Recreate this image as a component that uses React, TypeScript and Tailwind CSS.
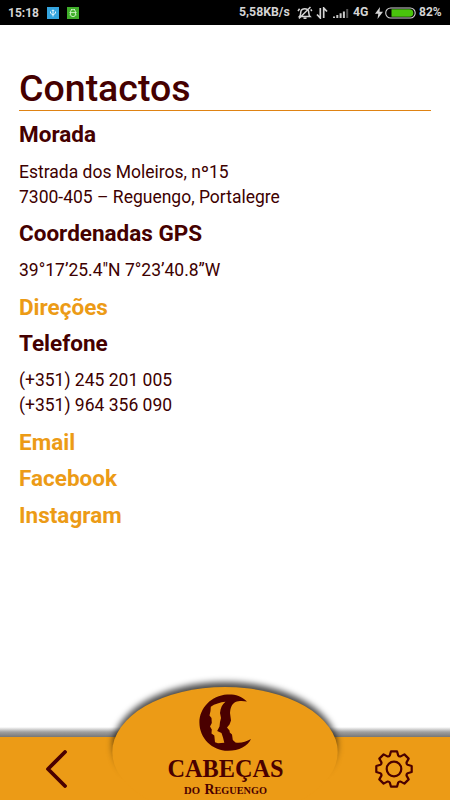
import React from "react";

const GEAR = (() => {
  const profile = [
    [-4.2, -13.6],
    [-3, -17.7],
    [3, -17.7],
    [4.2, -13.6],
  ];
  const parts: string[] = [];
  for (let i = 0; i < 8; i++) {
    const a = (i * Math.PI) / 4;
    const pts = profile.map(([x, y]) =>
      [x * Math.cos(a) - y * Math.sin(a), x * Math.sin(a) + y * Math.cos(a)].map((v) => v.toFixed(2)).join(" ")
    );
    parts.push(i === 0 ? `M${pts[0]}` : `A2.2 2.2 0 0 0 ${pts[0]}`);
    parts.push(`L${pts[1]}L${pts[2]}L${pts[3]}`);
  }
  return parts.join("") + "A2.2 2.2 0 0 0 -4.2 -13.6Z";
})();

function StatusBar() {
  return (
    <header className="flex h-[25px] items-center bg-black pl-2 pr-[7px] text-[12px] font-bold leading-[25px] text-[#d4d4d4]">
      <span className="w-[39px] pt-px">15:18</span>
      <svg className="h-3 w-3" viewBox="0 0 12 12">
        <rect width="12" height="12" fill="#35a5df" />
        <path d="M6 9.500V3M4.800 4L6 2.800l1.200 1.200M3.500 4.500v1.700L6 8l2.500-1.800V4.500" fill="none" stroke="#e4f5ff" />
      </svg>
      <svg className="ml-2 h-3 w-3" viewBox="0 0 12 12">
        <rect width="12" height="12" fill="#3fae2a" />
        <path d="M3.5 5a2.500 2.500 0 0 1 5 0v2.200a2.500 2.500 0 0 1-5 0zM2.400 5.600h7.200M4 2l1 1M8 2L7 3M2.500 7.800h1.200M8.300 7.800h1.200" fill="none" stroke="#cff3c5" strokeWidth=".9" />
      </svg>
      <span className="ml-auto w-[52px] whitespace-nowrap text-[12.3px]">5,58KB/s</span>
      <svg className="ml-[6px] h-[14px] w-4" viewBox="0 0 16 14" fill="none" stroke="#d4d4d4" strokeWidth="1.5">
        <path d="M2.500 10.500c1.500-1.500 1-4 1.500-5.500C5 2 10.500 2 11.500 5c.5 1.500 0 4 1.500 5.500zM6.500 12.200h3M13.500 1L2 12.500M1 5L2.600 2.800M14.800 5L13.800 3.300" />
      </svg>
      <svg className="ml-[3px] h-[12px] w-[12px]" viewBox="0 0 12 12" fill="none" stroke="#d4d4d4" strokeWidth="1.700">
        <path d="M4.300 1v10L1 7.500M7.700 11V1L11 4.500" />
      </svg>
      <svg className="ml-[5px] h-3 w-4" viewBox="0 0 16 12">
        <path d="M0 9.500h2v1.500H0zM3.300 8h2v3h-2zM6.600 6.200h2V11h-2zM9.900 4.400h2V11h-2z" fill="#c8c8c8" />
        <path d="M13.200 2h2v9h-2z" fill="#555" />
      </svg>
      <span className="ml-[4px] w-[17px] whitespace-nowrap text-[12.300px]">4G</span>
      <svg className="ml-[5px] h-3 w-2" viewBox="0 0 8 12">
        <path d="M5 0L0 6.800h3.300L2.500 12 8 4.800H4.500z" fill="#d4d4d4" />
      </svg>
      <svg className="ml-[2px] h-3 w-[31px]" viewBox="0 0 31 12">
        <rect x=".7" y="1" width="29.500" height="10" rx="5" fill="none" stroke="#d4d4d4" strokeWidth="1.100" />
        <path d="M6.500 2.200h18a3.800 3.800 0 0 1 0 7.600h-18z" fill="#49c40c" />
      </svg>
      <span className="ml-[3px] w-[24px] whitespace-nowrap">82%</span>
    </header>
  );
}

const heading = "mb-[11.25px] text-[22.5px] font-bold leading-[25.2px]";
const body = "mb-[11px] pt-[0.8px] text-[17.5px] leading-[25.2px] text-[#3d0000]";

function Contacts() {
  return (
    <main className="h-[775px] px-[19px] pt-[38px] text-[#450000]">
      <h1 className="h-[48px] border-b border-[#df8313] text-[37.5px] font-medium leading-[50px]">Contactos</h1>
      <div className="pt-[11.4px]">
        <h2 className={heading}>Morada</h2>
        <p className={body}>
          Estrada dos Moleiros, nº15
          <br />
          7300-405 – Reguengo, Portalegre
        </p>
        <h2 className={heading}>Coordenadas GPS</h2>
        <p className={body}>39°17’25.4"N 7°23’40.8”W</p>
        <h2 className={`${heading} text-[#ec9b16]`}>Direções</h2>
        <h2 className={heading}>Telefone</h2>
        <p className={body}>
          (+351) 245 201 005
          <br />
          (+351) 964 356 090
        </p>
        <h2 className={`${heading} text-[#ec9b16]`}>Email</h2>
        <h2 className={`${heading} text-[#ec9b16]`}>Facebook</h2>
        <h2 className={`${heading} text-[#ec9b16]`}>Instagram</h2>
      </div>
    </main>
  );
}

function Logo() {
  return (
    <svg className="absolute left-[100px] top-[-68px] h-[131px] w-[250px]" viewBox="100 669 250 131">
      <defs>
        <filter id="glow" x="-20%" y="-20%" width="140%" height="140%">
          <feGaussianBlur stdDeviation="3" />
        </filter>
        <linearGradient id="fade" x1="0" y1="0" x2="0" y2="1">
          <stop offset=".5" stopColor="#fff" />
          <stop offset=".85" stopColor="#000" />
        </linearGradient>
        <mask id="lower" maskUnits="userSpaceOnUse" x="100" y="669" width="250" height="131">
          <rect x="100" y="669" width="250" height="131" fill="url(#fade)" />
        </mask>
      </defs>
      <g mask="url(#lower)">
        <ellipse cx="225" cy="747" rx="112.500" ry="65" fill="#000" fillOpacity=".7" filter="url(#glow)" />
      </g>
      <ellipse cx="225" cy="752" rx="112.700" ry="65" fill="#ec9b16" />
      <path
        fill="#4a0000"
        d="M247 701.500C241 695.500 234 694 227 694.500C211.500 695.500 199.400 708 199.400 722.500C199.400 738 212 750.800 228 750.800C239 750.800 248 746 251 739C246 742 240 743.500 235.500 742.500L232.800 740L232 734.500L229.800 732.500L229.500 730.500L227 727.500L229.500 724.500L231 720.500L230 713C230.500 707 232 704 235.500 702C239 700.500 243.500 700.800 247 701.500Z"
      />
      <path
        fill="#ec9b16"
        d="M225.500 701.800C220.500 702.300 214.500 704 210.800 706.800L210.500 711L209.500 715.500L211.500 718L211.800 723L210 726.500L211.800 729.500L211.500 733.500L214.300 735.500L215 742.300L218 743.200L224.300 742.800L223 737.500L221.500 733L217.200 731L219.500 726.500L220 722L221 718L220 713C220.500 708 222 704.500 225.500 701.800Z"
      />
      <g fill="#4a0000" fontFamily="'Liberation Serif', serif" fontWeight="700">
        <text x="167.500" y="777" fontSize="25" textLength="116" lengthAdjust="spacingAndGlyphs">CABEÇAS</text>
        <text x="184" y="794" fontSize="10.500" textLength="16" lengthAdjust="spacingAndGlyphs">DO</text>
        <text x="204.500" y="794" fontSize="14.500" textLength="10" lengthAdjust="spacingAndGlyphs">R</text>
        <text x="214.500" y="794" fontSize="10.500" textLength="52.500" lengthAdjust="spacingAndGlyphs">EGUENGO</text>
      </g>
    </svg>
  );
}

export default function App() {
  return (
    <div className="relative h-[800px] w-[450px] overflow-hidden bg-white font-['Roboto',sans-serif]">
      <StatusBar />
      <Contacts />
      <nav className="absolute inset-x-0 bottom-0 h-[63px]">
        <div className="absolute inset-x-0 -top-[10px] h-[10px] bg-linear-to-b from-transparent via-[#a0a0a0] to-[#777]" />
        <div className="flex h-full items-center justify-between bg-[#ec9b16] pl-[45px] pr-[37px]">
          <svg className="h-[38px] w-[22px]" viewBox="45 750 22 38" fill="none" stroke="#4a0000" strokeWidth="3.800" strokeLinecap="round" strokeLinejoin="round">
            <path d="M65 752L48 769L65 786" />
          </svg>
          <svg className="h-[38px] w-[38px]" viewBox="-19 -19 38 38" fill="none" stroke="#4a0000" strokeWidth="2.200" strokeLinejoin="round">
            <path d={GEAR} />
            <circle r="7.300" />
          </svg>
        </div>
        <Logo />
      </nav>
    </div>
  );
}
